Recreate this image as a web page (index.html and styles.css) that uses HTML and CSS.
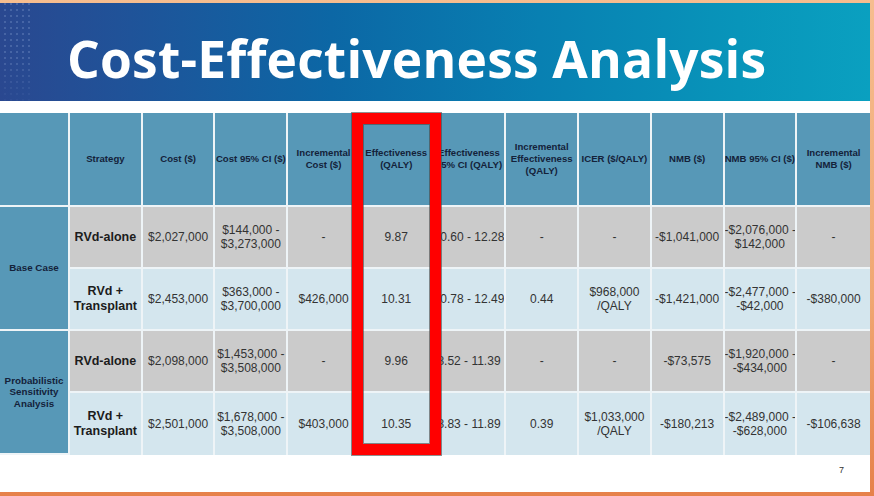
FILE: index.html
```html
<!DOCTYPE html>
<html>
<head>
<meta charset="utf-8">
<link rel="stylesheet" href="styles.css">
</head>
<body>
<div class="slide">
  <header class="banner">
    <div class="dots"></div>
    <h1 class="title">Cost-Effectiveness Analysis</h1>
  </header>
  <div class="table-wrap">
    <table class="cea">
      <colgroup>
        <col class="c-first">
        <col class="c"><col class="c"><col class="c"><col class="c"><col class="c"><col class="c">
        <col class="c"><col class="c"><col class="c"><col class="c"><col class="c">
      </colgroup>
      <thead>
        <tr class="head-row">
          <th></th>
          <th>Strategy</th>
          <th>Cost ($)</th>
          <th>Cost 95% CI ($)</th>
          <th>Incremental<br>Cost ($)</th>
          <th>Effectiveness<br>(QALY)</th>
          <th>Effectiveness<br>95% CI (QALY)</th>
          <th>Incremental<br>Effectiveness<br>(QALY)</th>
          <th>ICER ($/QALY)</th>
          <th>NMB ($)</th>
          <th>NMB 95% CI ($)</th>
          <th class="last">Incremental<br>NMB ($)</th>
        </tr>
      </thead>
      <tbody>
        <tr class="row gray">
          <th class="group" rowspan="2">Base Case</th>
          <td class="strat">RVd-alone</td>
          <td>$2,027,000</td>
          <td>$144,000 -<br>$3,273,000</td>
          <td>-</td>
          <td>9.87</td>
          <td>10.60 - 12.28</td>
          <td>-</td>
          <td>-</td>
          <td>-$1,041,000</td>
          <td>-$2,076,000 -<br>$142,000</td>
          <td class="last">-</td>
        </tr>
        <tr class="row light">
          <td class="strat">RVd +<br>Transplant</td>
          <td>$2,453,000</td>
          <td>$363,000 -<br>$3,700,000</td>
          <td>$426,000</td>
          <td>10.31</td>
          <td>10.78 - 12.49</td>
          <td>0.44</td>
          <td>$968,000<br>/QALY</td>
          <td>-$1,421,000</td>
          <td>-$2,477,000 -<br>-$42,000</td>
          <td class="last">-$380,000</td>
        </tr>
        <tr class="row gray">
          <th class="group" rowspan="2">Probabilistic<br>Sensitivity<br>Analysis</th>
          <td class="strat">RVd-alone</td>
          <td>$2,098,000</td>
          <td>$1,453,000 -<br>$3,508,000</td>
          <td>-</td>
          <td>9.96</td>
          <td>8.52 - 11.39</td>
          <td>-</td>
          <td>-</td>
          <td>-$73,575</td>
          <td>-$1,920,000 -<br>-$434,000</td>
          <td class="last">-</td>
        </tr>
        <tr class="row light bottom">
          <td class="strat">RVd +<br>Transplant</td>
          <td>$2,501,000</td>
          <td>$1,678,000 -<br>$3,508,000</td>
          <td>$403,000</td>
          <td>10.35</td>
          <td>8.83 - 11.89</td>
          <td>0.39</td>
          <td>$1,033,000<br>/QALY</td>
          <td>-$180,213</td>
          <td>-$2,489,000 -<br>-$628,000</td>
          <td class="last">-$106,638</td>
        </tr>
      </tbody>
    </table>
    <div class="highlight"></div>
  </div>
  <div class="footer">
    <span class="page-num">7</span>
  </div>
</div>
</body>
</html>
```

FILE: styles.css
```css
* { box-sizing: border-box; }

html, body {
  margin: 0;
  padding: 0;
  width: 874px;
  height: 496px;
  overflow: hidden;
}

body {
  background: linear-gradient(to bottom, #f6bd8f 0%, #f0a772 60%, #e6814a 100%);
  font-family: "Liberation Sans", Arial, sans-serif;
}

.slide {
  margin: 3px 4px 0 0;
  width: 870px;
  height: 489px;
  background: #ffffff;
  display: flex;
  flex-direction: column;
}

.banner {
  height: 98px;
  display: flex;
  align-items: stretch;
  background: linear-gradient(90deg, #2a4890 0%, #1f5399 15%, #0c67a5 38%, #0880b2 62%, #0895ba 85%, #0aa0c0 100%);
}

.dots {
  width: 30px;
  flex: none;
  background-image: radial-gradient(circle, rgba(150, 175, 220, 0.35) 0.6px, rgba(0,0,0,0) 1.1px);
  background-size: 6px 6px;
  background-position: 2px 4px;
  -webkit-mask-image: linear-gradient(to bottom, #000 0%, #000 55%, rgba(0,0,0,0.15) 100%);
  mask-image: linear-gradient(to bottom, #000 0%, #000 55%, rgba(0,0,0,0.15) 100%);
}

.title {
  margin: 0;
  padding: 0 0 0 37px;
  align-self: center;
  font-family: "Open Sans", "Liberation Sans", sans-serif;
  font-weight: 700;
  font-size: 51.5px;
  letter-spacing: 0.2px;
  line-height: 1;
  color: #ffffff;
  position: relative;
  top: 7px;
}

.table-wrap {
  margin-top: 12px;
  position: relative;
  width: 870px;
}

.cea {
  width: 870px;
  table-layout: fixed;
  border-collapse: separate;
  border-spacing: 0;
}

.c-first { width: 70px; }
.c { width: 72.7px; }

.cea th,
.cea td {
  padding: 0;
  text-align: center;
  vertical-align: middle;
  border-right: 2px solid #eef4f7;
  border-bottom: 2px solid #eef4f7;
  overflow: hidden;
  white-space: nowrap;
}

.cea .last { border-right: none; }

.head-row { height: 94px; }

.head-row th {
  background: #5798b7;
  color: #14223a;
  font-size: 9.6px;
  font-weight: 700;
  line-height: 12px;
}

.row { height: 62px; }

.row td {
  font-size: 12px;
  line-height: 14px;
  color: #333333;
}

.row.gray td { background: #cbcbcb; }
.row.light td { background: #d4e6ee; }
.row.bottom td, .row.bottom th { border-bottom: none; }

.row .strat {
  font-weight: 700;
  color: #1c1c1c;
  font-size: 12.5px;
  line-height: 15px;
}

.group {
  background: #5798b7;
  color: #14223a;
  font-size: 9.8px;
  font-weight: 700;
  line-height: 11.5px;
}

.highlight {
  position: absolute;
  left: 352px;
  top: 0;
  width: 89px;
  height: 342px;
  border: 11px solid #ff0000;
  box-shadow: 0 0 0 1px rgba(70, 70, 70, 0.6), inset 0 0 0 1px rgba(70, 70, 70, 0.6);
}

.footer {
  flex: 1;
  display: flex;
  justify-content: flex-end;
  align-items: flex-start;
  padding: 10px 26px 0 0;
}

.page-num {
  font-size: 9px;
  color: #333333;
}
```
